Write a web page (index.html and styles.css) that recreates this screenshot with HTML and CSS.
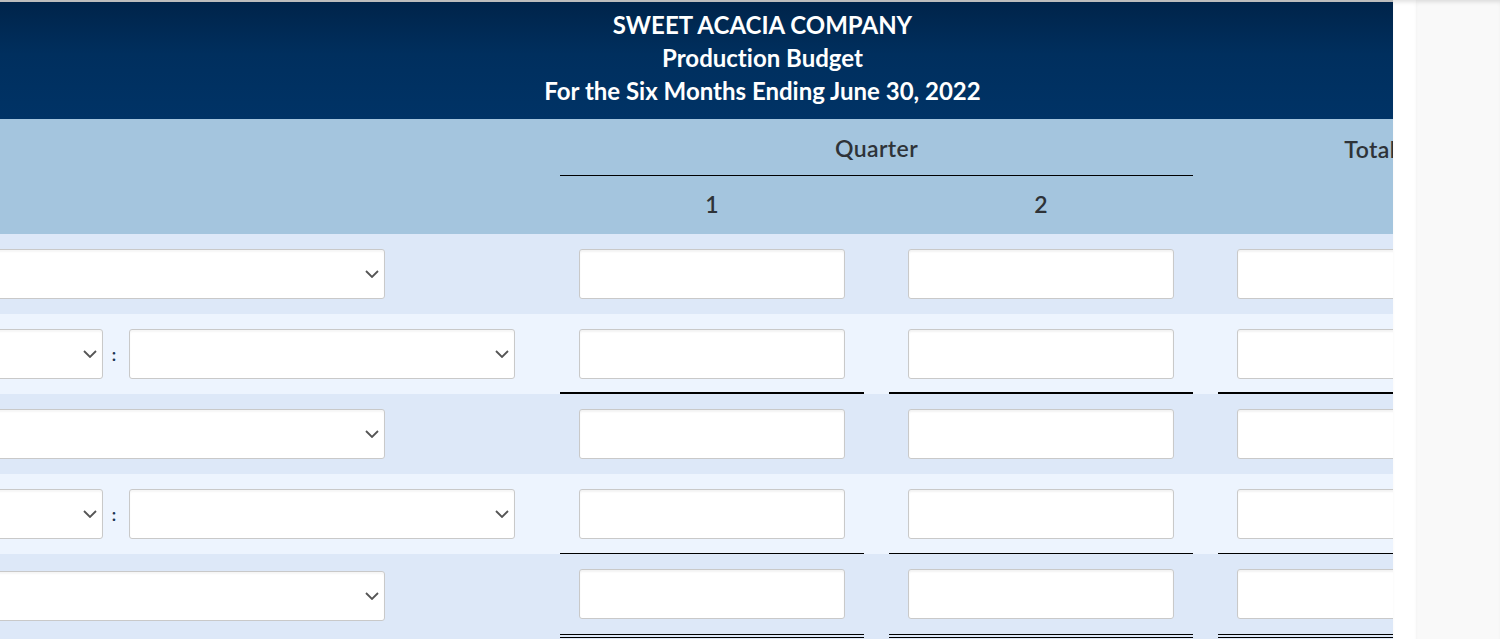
FILE: index.html
```html
<!DOCTYPE html>
<html>
<head>
<meta charset="utf-8">
<link rel="stylesheet" href="styles.css">
</head>
<body>
<div class="page">
  <div class="main">
    <div class="topbar"></div>
    <header class="title">
      <div>SWEET ACACIA COMPANY</div>
      <div>Production Budget</div>
      <div>For the Six Months Ending June 30, 2022</div>
    </header>
    <div class="colhead">
      <div class="quarter">Quarter</div>
      <div class="total">Total</div>
      <div class="qnum q1">1</div>
      <div class="qnum q2">2</div>
    </div>

    <div class="row odd">
      <div class="label"><div class="select wide"><svg class="chev" viewBox="0 0 14 8"><path d="M1 1 L7 7 L13 1"/></svg></div></div>
      <div class="cell"><div class="input"></div></div>
      <div class="cell"><div class="input"></div></div>
      <div class="cell"><div class="input"></div></div>
    </div>

    <div class="row even rule-2">
      <div class="label split">
        <div class="select small"><svg class="chev" viewBox="0 0 14 8"><path d="M1 1 L7 7 L13 1"/></svg></div>
        <span class="colon">:</span>
        <div class="select mid"><svg class="chev" viewBox="0 0 14 8"><path d="M1 1 L7 7 L13 1"/></svg></div>
      </div>
      <div class="cell"><div class="input"></div></div>
      <div class="cell"><div class="input"></div></div>
      <div class="cell"><div class="input"></div></div>
    </div>

    <div class="row odd">
      <div class="label"><div class="select wide"><svg class="chev" viewBox="0 0 14 8"><path d="M1 1 L7 7 L13 1"/></svg></div></div>
      <div class="cell"><div class="input"></div></div>
      <div class="cell"><div class="input"></div></div>
      <div class="cell"><div class="input"></div></div>
    </div>

    <div class="row even rule-1">
      <div class="label split">
        <div class="select small"><svg class="chev" viewBox="0 0 14 8"><path d="M1 1 L7 7 L13 1"/></svg></div>
        <span class="colon">:</span>
        <div class="select mid"><svg class="chev" viewBox="0 0 14 8"><path d="M1 1 L7 7 L13 1"/></svg></div>
      </div>
      <div class="cell"><div class="input"></div></div>
      <div class="cell"><div class="input"></div></div>
      <div class="cell"><div class="input"></div></div>
    </div>

    <div class="row odd rule-double">
      <div class="label"><div class="select wide"><svg class="chev" viewBox="0 0 14 8"><path d="M1 1 L7 7 L13 1"/></svg></div></div>
      <div class="cell"><div class="input"></div></div>
      <div class="cell"><div class="input"></div></div>
      <div class="cell"><div class="input"></div></div>
    </div>
  </div>
  <div class="gutter"></div>
  <div class="side"></div>
</div>
</body>
</html>
```

FILE: styles.css
```css
html, body {
  margin: 0;
  padding: 0;
  background: #f9f9f9;
  font-family: Lato, "Liberation Sans", sans-serif;
  font-variant-ligatures: none;
}

.page {
  display: flex;
  height: 639px;
  overflow: hidden;
}

.main {
  width: 1393px;
  flex: none;
  overflow: hidden;
  background: #dde8f8;
}

.gutter {
  width: 23px;
  flex: none;
  background: #ffffff;
  box-shadow: inset 0 4px 4px -2px rgba(0, 0, 0, 0.12);
}

.side {
  flex: 1;
  background: #f9f9f9;
  box-shadow: inset 0 4px 4px -2px rgba(0, 0, 0, 0.12);
}

.topbar {
  height: 2px;
  background: #bdbdbd;
}

.title {
  height: 117px;
  box-sizing: border-box;
  padding: 6px 0 0 132px;
  background: linear-gradient(to bottom, #00244a 0%, #002f5e 45%, #003366 100%);
  color: #ffffff;
  font-weight: 700;
  font-size: 24px;
  line-height: 33px;
  text-align: center;
}

.colhead {
  display: grid;
  grid-template-columns: 535px 304px 304px 304px;
  grid-template-rows: 57px 58px;
  column-gap: 25px;
  width: 1522px;
  background: #a4c5de;
  color: #2e3338;
  font-weight: 600;
  font-size: 23px;
  letter-spacing: 0.4px;
}

.quarter {
  grid-column: 2 / 4;
  grid-row: 1;
  border-bottom: 1px solid #000;
  display: flex;
  align-items: center;
  justify-content: center;
  padding-top: 2px;
}

.total {
  grid-column: 4;
  grid-row: 1;
  display: flex;
  align-items: center;
  justify-content: center;
  padding-top: 2px;
}

.qnum {
  grid-row: 2;
  display: flex;
  align-items: center;
  justify-content: center;
  padding-bottom: 2px;
}

.q1 { grid-column: 2; }
.q2 { grid-column: 3; }

.row {
  display: grid;
  grid-template-columns: 535px 304px 304px 304px;
  column-gap: 25px;
  width: 1522px;
}

.odd { background: #dde8f8; }
.even { background: #edf4fe; }

.label {
  padding: 15px 0;
  display: flex;
  align-items: center;
}

.cell {
  box-sizing: border-box;
  height: 80px;
  padding: 15px 20px 15px 19px;
}

.rule-2 .cell {
  border-bottom: 2px solid #000;
  padding-bottom: 13px;
}

.rule-1 .cell {
  border-bottom: 1px solid #000;
  padding-bottom: 14px;
}

.rule-double .cell {
  height: 84px;
  border-bottom: 4px double #000;
}

.input {
  box-sizing: border-box;
  width: 266px;
  height: 50px;
  background: #ffffff;
  border: 1px solid #c9c9c9;
  border-radius: 3px;
  box-shadow: inset 0 2px 2px rgba(0, 0, 0, 0.05);
}

.select {
  box-sizing: border-box;
  height: 50px;
  background: #ffffff;
  border: 1px solid #c9c9c9;
  border-radius: 3px;
  box-shadow: inset 0 2px 2px rgba(0, 0, 0, 0.04);
  display: flex;
  align-items: center;
  justify-content: flex-end;
  padding-right: 5px;
}

.select.wide {
  width: 401px;
  margin-left: -16px;
}

.select.small {
  width: 121px;
  margin-left: -18px;
}

.select.mid {
  width: 386px;
}

.colon {
  width: 26px;
  box-sizing: border-box;
  padding-right: 4px;
  text-align: center;
  color: #1d3452;
  font-weight: 700;
  font-size: 17px;
  line-height: 1;
}

.chev {
  width: 14px;
  height: 8px;
  fill: none;
  stroke: #555555;
  stroke-width: 1.8;
}
```
